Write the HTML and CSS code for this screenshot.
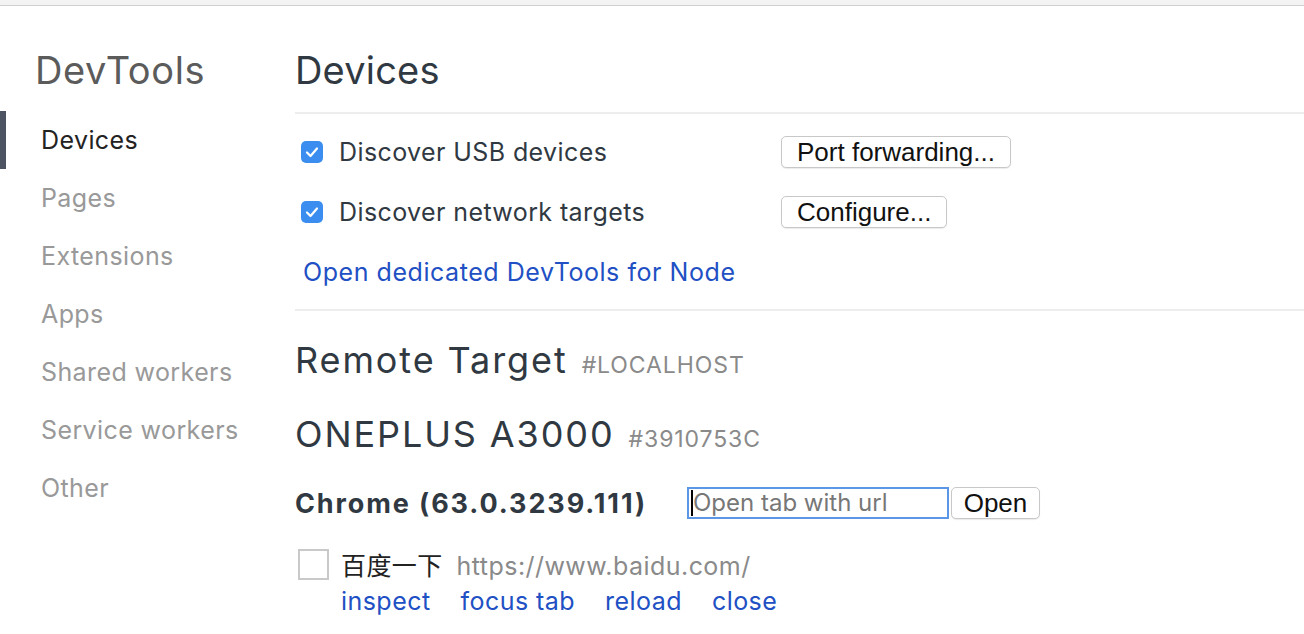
FILE: index.html
```html
<!DOCTYPE html>
<html>
<head>
<meta charset="utf-8">
<link rel="stylesheet" href="styles.css">
</head>
<body>
<div class="topbar"></div>
<div class="layout">
  <nav class="sidebar">
    <div class="brand">DevTools</div>
    <ul class="nav">
      <li class="nav-item active">Devices</li>
      <li class="nav-item">Pages</li>
      <li class="nav-item">Extensions</li>
      <li class="nav-item">Apps</li>
      <li class="nav-item">Shared workers</li>
      <li class="nav-item">Service workers</li>
      <li class="nav-item">Other</li>
    </ul>
  </nav>
  <main class="content">
    <header class="page-header"><h1 class="title">Devices</h1></header>
    <section class="options">
      <div class="opt-row">
        <label class="opt-label"><span class="check"><svg viewBox="0 0 22 22" width="22" height="22"><path d="M6 11.5 L9.5 15 L16 7.5" fill="none" stroke="#fff" stroke-width="2.2" stroke-linecap="round" stroke-linejoin="round"/></svg></span>Discover USB devices</label>
        <button class="btn">Port forwarding...</button>
      </div>
      <div class="opt-row">
        <label class="opt-label"><span class="check"><svg viewBox="0 0 22 22" width="22" height="22"><path d="M6 11.5 L9.5 15 L16 7.5" fill="none" stroke="#fff" stroke-width="2.2" stroke-linecap="round" stroke-linejoin="round"/></svg></span>Discover network targets</label>
        <button class="btn">Configure...</button>
      </div>
      <div class="opt-row"><a class="link node-link">Open dedicated DevTools for Node</a></div>
    </section>
    <section class="targets">
      <h2 class="target-title">Remote Target <span class="sub">#LOCALHOST</span></h2>
      <h2 class="device-title">ONEPLUS A3000 <span class="sub">#3910753C</span></h2>
      <div class="browser-row">
        <span class="browser-name">Chrome (63.0.3239.111)</span>
        <div class="url-input"><span class="caret"></span><span class="placeholder">Open tab with url</span></div>
        <button class="btn open-btn">Open</button>
      </div>
      <div class="page-row">
        <span class="favicon"></span>
        <div class="page-info">
          <div class="page-line"><span class="page-name">百度一下</span><span class="page-url">https://www.baidu.com/</span></div>
          <div class="actions"><a class="link">inspect</a><a class="link">focus tab</a><a class="link">reload</a><a class="link">close</a></div>
        </div>
      </div>
    </section>
  </main>
</div>
</body>
</html>
```
FILE: styles.css
```css
* { box-sizing: border-box; }
html, body { margin: 0; padding: 0; background: #fff; }
body {
  font-family: Inter, "Liberation Sans", "Noto Sans CJK SC", sans-serif;
  color: #303942;
  font-size: 25px;
  letter-spacing: 0.4px;
  overflow: hidden;
}
.topbar {
  height: 6px;
  background: #f3f3f3;
  border-bottom: 1px solid #cfcfcf;
}
.layout { display: flex; }
.sidebar { width: 295px; flex: none; }
.brand {
  font-size: 38px;
  line-height: 40px;
  letter-spacing: 0.6px;
  color: #5b5b5b;
  padding: 44px 0 0 35px;
  height: 105px;
}
.nav { list-style: none; margin: 0; padding: 0; }
.nav-item {
  height: 58px;
  line-height: 58px;
  padding-left: 41px;
  color: #999;
  font-size: 25px;
  position: relative;
}
.nav-item.active { color: #222; }
.nav-item.active::before {
  content: "";
  position: absolute;
  left: 0; top: 0; bottom: 0;
  width: 6px;
  background: #4c5361;
}
.content { flex: 1; min-width: 0; }
.page-header {
  padding-top: 44px;
  padding-bottom: 22px;
  border-bottom: 2px solid #ededed;
}
.title {
  margin: 0;
  font-size: 38px;
  line-height: 40px;
  letter-spacing: 0.2px;
  font-weight: normal;
  color: #303942;
}
.options {
  padding: 8px 0 7px;
  border-bottom: 2px solid #ededed;
}
.opt-row {
  height: 60px;
  display: flex;
  align-items: center;
}
.opt-label {
  width: 486px;
  display: flex;
  align-items: center;
  gap: 16px;
  padding-left: 6px;
  color: #303942;
}
.check {
  width: 22px; height: 22px;
  border-radius: 5px;
  background: #3b8ef0;
  display: inline-flex;
}
.btn {
  font-family: "Liberation Sans", Arial, sans-serif;
  font-size: 26px;
  letter-spacing: 0;
  height: 32px;
  padding: 0 15px;
  background: #fff;
  color: #111;
  border: 1px solid #c8c8c8;
  border-radius: 5px;
  box-shadow: 0 1px 1px rgba(0,0,0,0.08);
  line-height: 30px;
}
.link { color: #2150c4; text-decoration: none; cursor: pointer; }
.node-link { padding-left: 8px; letter-spacing: 0.55px; }
.targets { padding-top: 29px; }
.target-title, .device-title {
  margin: 0;
  font-size: 36px;
  line-height: 40px;
  letter-spacing: 1.9px;
  font-weight: normal;
  color: #303942;
}
.device-title { margin-top: 29px; }
.sub { font-size: 23px; letter-spacing: 0.9px; color: #8a8a8a; margin-left: 2px; }
.browser-row {
  margin-top: 28px;
  display: flex;
  align-items: center;
  height: 32px;
}
.browser-name { font-weight: bold; font-size: 27px; letter-spacing: 1.9px; width: 392px; }
.url-input {
  width: 262px;
  height: 32px;
  border: 2px solid #5b97e6;
  display: flex;
  align-items: center;
  padding-left: 2px;
}
.caret { width: 2px; height: 26px; background: #000; }
.placeholder { color: #777; font-size: 24px; letter-spacing: 0; line-height: 28px; }
.open-btn { margin-left: 2px; width: 89px; padding: 0; }
.page-row {
  margin-top: 30px;
  display: flex;
  align-items: flex-start;
  padding-left: 3px;
}
.favicon {
  width: 31px; height: 31px;
  border: 2px solid #c9c9c9;
  flex: none;
}
.page-info { margin-left: 12px; }
.page-line { line-height: 35px; height: 35px; }
.page-name { font-size: 25px; color: #222; }
.page-url { color: #8a8a8a; margin-left: 14px; letter-spacing: 0.45px; }
.actions { display: flex; gap: 30px; line-height: 35px; letter-spacing: 0.45px; }
```
